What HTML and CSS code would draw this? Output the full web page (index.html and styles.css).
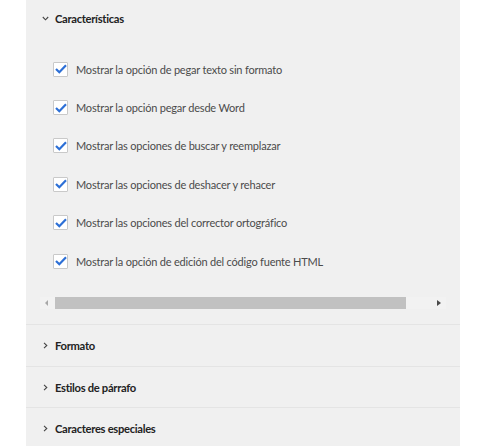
FILE: index.html
```
<!DOCTYPE html>
<html lang="es">
<head>
<meta charset="utf-8">
<link rel="stylesheet" href="styles.css">
</head>
<body>
<div class="page">
  <div class="panel">
    <div class="section open">
      <div class="sec-head">
        <svg class="chev" width="7" height="5" viewBox="0 0 7 5"><path d="M0.8 1 L3.5 3.8 L6.2 1" fill="none" stroke="#444" stroke-width="1.1"/></svg>
        <span class="sec-title">Características</span>
      </div>
      <div class="opts">
        <label class="opt"><span class="box"><svg width="12" height="10" viewBox="0 0 12 10"><path d="M1 5 L4.3 8.2 L11 1.2" fill="none" stroke="#2c6fd6" stroke-width="2.2"/></svg></span><span class="txt">Mostrar la opción de pegar texto sin formato</span></label>
        <label class="opt"><span class="box"><svg width="12" height="10" viewBox="0 0 12 10"><path d="M1 5 L4.3 8.2 L11 1.2" fill="none" stroke="#2c6fd6" stroke-width="2.2"/></svg></span><span class="txt">Mostrar la opción pegar desde Word</span></label>
        <label class="opt"><span class="box"><svg width="12" height="10" viewBox="0 0 12 10"><path d="M1 5 L4.3 8.2 L11 1.2" fill="none" stroke="#2c6fd6" stroke-width="2.2"/></svg></span><span class="txt">Mostrar las opciones de buscar y reemplazar</span></label>
        <label class="opt"><span class="box"><svg width="12" height="10" viewBox="0 0 12 10"><path d="M1 5 L4.3 8.2 L11 1.2" fill="none" stroke="#2c6fd6" stroke-width="2.2"/></svg></span><span class="txt">Mostrar las opciones de deshacer y rehacer</span></label>
        <label class="opt"><span class="box"><svg width="12" height="10" viewBox="0 0 12 10"><path d="M1 5 L4.3 8.2 L11 1.2" fill="none" stroke="#2c6fd6" stroke-width="2.2"/></svg></span><span class="txt">Mostrar las opciones del corrector ortográfico</span></label>
        <label class="opt"><span class="box"><svg width="12" height="10" viewBox="0 0 12 10"><path d="M1 5 L4.3 8.2 L11 1.2" fill="none" stroke="#2c6fd6" stroke-width="2.2"/></svg></span><span class="txt">Mostrar la opción de edición del código fuente HTML</span></label>
      </div>
      <div class="hscroll">
        <span class="arr left"></span>
        <div class="track"><div class="thumb"></div></div>
        <span class="arr right"></span>
      </div>
    </div>
    <div class="section">
      <div class="sec-head">
        <svg class="chev r" width="5" height="7" viewBox="0 0 5 7"><path d="M1 0.8 L3.8 3.5 L1 6.2" fill="none" stroke="#444" stroke-width="1.1"/></svg>
        <span class="sec-title">Formato</span>
      </div>
    </div>
    <div class="section">
      <div class="sec-head">
        <svg class="chev r" width="5" height="7" viewBox="0 0 5 7"><path d="M1 0.8 L3.8 3.5 L1 6.2" fill="none" stroke="#444" stroke-width="1.1"/></svg>
        <span class="sec-title">Estilos de párrafo</span>
      </div>
    </div>
    <div class="section">
      <div class="sec-head">
        <svg class="chev r" width="5" height="7" viewBox="0 0 5 7"><path d="M1 0.8 L3.8 3.5 L1 6.2" fill="none" stroke="#444" stroke-width="1.1"/></svg>
        <span class="sec-title">Caracteres especiales</span>
      </div>
    </div>
  </div>
</div>
</body>
</html>
```

FILE: styles.css
```
html, body {
  margin: 0;
  padding: 0;
  background: #ffffff;
}
.page {
  display: flex;
  height: 446px;
  overflow: hidden;
  padding-left: 26px;
}
.panel {
  width: 434px;
  background: #f0f0f0;
  font-family: "Lato", "Open Sans", sans-serif;
}
.section {
  border-bottom: 1px solid #e4e4e4;
}
.section.open {
  padding-bottom: 15px;
}
.sec-head {
  display: flex;
  align-items: center;
  height: 36px;
  padding-left: 16px;
}
.section:not(.open) .sec-head {
  height: 40.5px;
}
.chev {
  display: block;
  margin-right: 6px;
}
.chev.r {
  margin-left: 1px;
  margin-right: 7px;
}
.sec-title {
  font-family: "Lato", "Open Sans", sans-serif;
  font-weight: 700;
  font-size: 11.2px;
  letter-spacing: -0.3px;
  color: #222;
}
.opts {
  padding-top: 14px;
}
.opt {
  display: flex;
  align-items: center;
  height: 38.4px;
  padding-left: 27px;
}
.box {
  box-sizing: border-box;
  width: 15px;
  height: 15px;
  border: 1px solid #c9c9c9;
  background: #fff;
  border-radius: 1px;
  display: flex;
  align-items: center;
  justify-content: center;
  margin-right: 8px;
}
.box svg {
  display: block;
}
.txt {
  font-size: 11px;
  letter-spacing: -0.2px;
  color: #4b4b4b;
  white-space: nowrap;
}
.hscroll {
  display: flex;
  align-items: center;
  height: 12px;
  margin-top: 17px;
  margin-left: 14px;
  width: 406px;
  background: #f2f2f2;
}
.arr {
  width: 0;
  height: 0;
  border-top: 3px solid transparent;
  border-bottom: 3px solid transparent;
}
.arr.left {
  border-right: 3px solid #a8a8a8;
  margin-left: 5px;
  margin-right: 7px;
}
.arr.right {
  border-left: 4px solid #4a4a4a;
  margin-left: 31px;
}
.track {
  width: 351px;
  height: 12px;
}
.thumb {
  width: 100%;
  height: 100%;
  background: #c1c1c1;
}
```
